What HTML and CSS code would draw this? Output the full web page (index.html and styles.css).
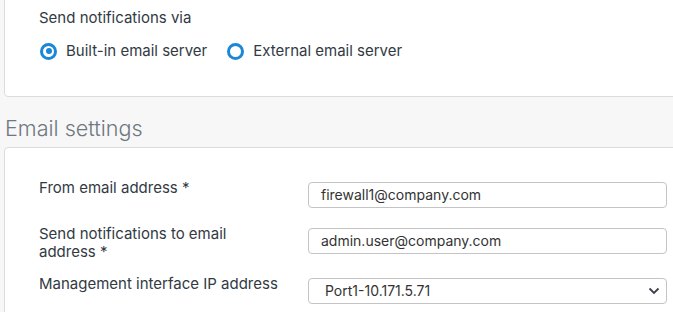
FILE: index.html
```html
<!DOCTYPE html>
<html lang="en">
<head>
    <meta charset="UTF-8">
    <meta name="viewport" content="width=device-width, initial-scale=1.0">
    <link rel="stylesheet" href="styles.css">
</head>
<body>
    <section class="panel panel-top">
        <div class="via-label">Send notifications via</div>
        <div class="radio-row">
            <label class="radio">
                <span class="radio-dot checked"></span>
                <span>Built-in email server</span>
            </label>
            <label class="radio">
                <span class="radio-dot"></span>
                <span>External email server</span>
            </label>
        </div>
    </section>

    <h2 class="section-title">Email settings</h2>

    <section class="panel panel-form">
        <div class="form-row">
            <label class="field-label">From email address *</label>
            <div class="field">firewall1@company.com</div>
        </div>
        <div class="form-row tall">
            <label class="field-label">Send notifications to email<br>address *</label>
            <div class="field">admin.user@company.com</div>
        </div>
        <div class="form-row">
            <label class="field-label">Management interface IP address</label>
            <div class="field select">
                <span>Port1-10.171.5.71</span>
                <svg width="12" height="8" viewBox="0 0 12 8">
                    <path d="M1.5 1.5 L6 6 L10.5 1.5" fill="none" stroke="#3a4149" stroke-width="1.8"/>
                </svg>
            </div>
        </div>
    </section>
</body>
</html>
```

FILE: styles.css
```css
body {
    margin: 0;
    background-color: #f7f7f7;
    font-family: Inter, Roboto, "Liberation Sans", sans-serif;
    color: #323a43;
    overflow: hidden;
}
.panel {
    background-color: #fff;
    border: 1px solid #dcdcdc;
    border-radius: 4px;
    margin-left: 4px;
    margin-right: -20px;
}
.panel-top {
    margin-top: -10px;
    height: 107px;
    padding-left: 34px;
    box-sizing: border-box;
    padding-top: 17px;
}
.via-label {
    font-size: 15px;
    line-height: 20px;
}
.radio-row {
    display: flex;
    margin-top: 13px;
    font-size: 15px;
    line-height: 20px;
}
.radio {
    display: flex;
    align-items: center;
    margin-right: 19px;
}
.radio-dot {
    width: 17px;
    height: 17px;
    box-sizing: border-box;
    border: 3px solid #1b87d5;
    border-radius: 50%;
    margin-right: 9px;
    margin-left: 1px;
    display: flex;
    align-items: center;
    justify-content: center;
}
.radio-dot.checked::after {
    content: "";
    width: 6px;
    height: 6px;
    border-radius: 50%;
    background-color: #1b87d5;
}
.section-title {
    margin: 19px 0 7px 5px;
    font-size: 21.6px;
    line-height: 24px;
    font-weight: 300;
    color: #6f787f;
}
.panel-form {
    padding: 34px 0 20px 34px;
    height: 200px;
}
.form-row {
    display: grid;
    grid-template-columns: 269px 359px;
    align-items: start;
    margin-bottom: 20px;
}
.form-row.tall {
    margin-bottom: 17px;
}
.field-label {
    font-size: 15px;
    line-height: 18px;
    margin-top: -3px;
}
.field {
    height: 26px;
    box-sizing: border-box;
    border: 1px solid #c4c4c4;
    border-radius: 4px;
    padding-left: 12px;
    font-size: 14px;
    line-height: 24px;
    color: #333;
}
.select {
    display: flex;
    align-items: center;
    justify-content: space-between;
    padding-left: 16px;
    padding-right: 6px;
}
```
